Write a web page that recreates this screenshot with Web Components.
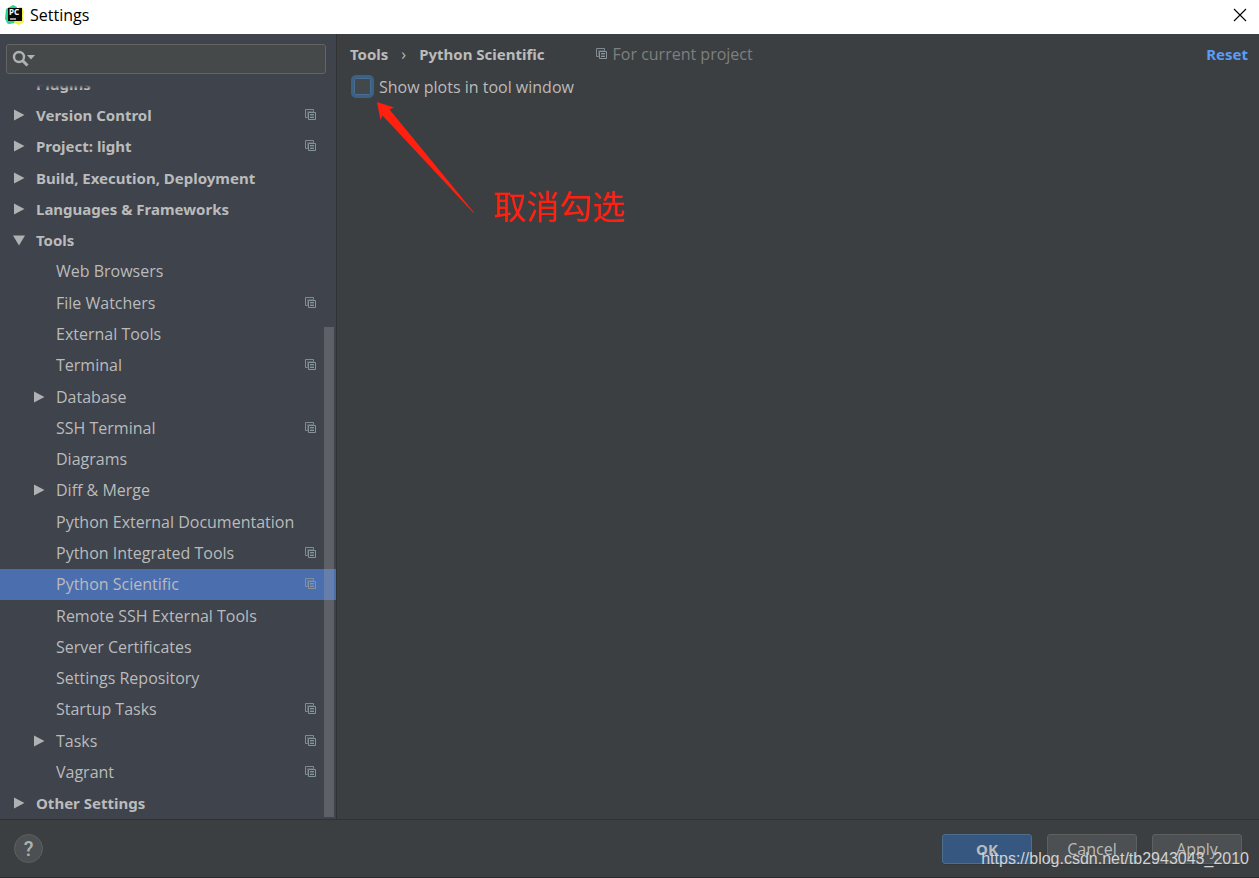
<!DOCTYPE html>
<html lang="en">
<head>
<meta charset="utf-8">
<title>Settings</title>
<style>
html, body { margin: 0; height: 100%; }
body { background: #3c3f41; color: #bbbbbb; font: 16px/20px "Open Sans", "Noto Sans CJK SC", sans-serif; overflow: hidden; }
</style>
</head>
<body>
<settings-window>
  <title-bar slot="title">Settings</title-bar>
  <settings-sidebar slot="sidebar">
    <tree-row group>Plugins</tree-row>
    <tree-row group arrow="right">Version Control<project-icon slot="badge"></project-icon></tree-row>
    <tree-row group arrow="right">Project: light<project-icon slot="badge"></project-icon></tree-row>
    <tree-row group arrow="right">Build, Execution, Deployment</tree-row>
    <tree-row group arrow="right">Languages &amp; Frameworks</tree-row>
    <tree-row group arrow="down">Tools</tree-row>
    <tree-row>Web Browsers</tree-row>
    <tree-row>File Watchers<project-icon slot="badge"></project-icon></tree-row>
    <tree-row>External Tools</tree-row>
    <tree-row>Terminal<project-icon slot="badge"></project-icon></tree-row>
    <tree-row arrow="right">Database</tree-row>
    <tree-row>SSH Terminal<project-icon slot="badge"></project-icon></tree-row>
    <tree-row>Diagrams</tree-row>
    <tree-row arrow="right">Diff &amp; Merge</tree-row>
    <tree-row>Python External Documentation</tree-row>
    <tree-row>Python Integrated Tools<project-icon slot="badge"></project-icon></tree-row>
    <tree-row selected>Python Scientific<project-icon slot="badge"></project-icon></tree-row>
    <tree-row>Remote SSH External Tools</tree-row>
    <tree-row>Server Certificates</tree-row>
    <tree-row>Settings Repository</tree-row>
    <tree-row>Startup Tasks<project-icon slot="badge"></project-icon></tree-row>
    <tree-row arrow="right">Tasks<project-icon slot="badge"></project-icon></tree-row>
    <tree-row>Vagrant<project-icon slot="badge"></project-icon></tree-row>
    <tree-row group arrow="right">Other Settings</tree-row>
  </settings-sidebar>
  <settings-page slot="page">
    <page-header slot="header"></page-header>
    <check-option>Show plots in tool window</check-option>
    <red-callout slot="note">取消勾选</red-callout>
  </settings-page>
  <dialog-footer slot="footer">
    <dialog-button primary>OK</dialog-button>
    <dialog-button>Cancel</dialog-button>
    <dialog-button>Apply</dialog-button>
  </dialog-footer>
  <water-mark slot="mark">https://blog.csdn.net/tb2943043_2010</water-mark>
</settings-window>

<script>
function define(name, markup) {
  customElements.define(name, class extends HTMLElement {
    constructor() {
      super();
      const template = document.createElement('template');
      template.innerHTML = markup;
      this.attachShadow({ mode: 'open' }).append(template.content.cloneNode(true));
    }
  });
}

define('project-icon', `
<style>
:host { display: block; width: 12px; height: 12px; color: #87939a; }
svg { display: block; }
</style>
<svg width="12" height="12" viewBox="0 0 12 12" fill="none" stroke="currentColor" aria-hidden="true">
  <path d="M2.500 8.500H.5V.5h8v2" opacity=".9"/>
  <path d="M2.500 9V2.500H9" opacity=".4"/>
  <path d="M3.500 3.500h7v7h-7z"/>
  <path d="M5 5.500h4M5 8.500h4"/>
  <path d="M5 6.500h4M5 7.500h4" opacity=".35"/>
</svg>`);

define('title-bar', `
<style>
:host { display: flex; align-items: center; height: 34px; padding: 0 12px 4px 5px; box-sizing: border-box; background: #fff; color: #000; gap: 5px; }
h1 { flex: 1; margin: 0; font-size: 16px; font-weight: 400; line-height: 20px; }
button { all: unset; width: 14px; height: 14px; }
svg { display: block; }
</style>
<svg width="20" height="20" viewBox="0 0 20 20" aria-hidden="true">
  <path d="M1 4 8 0l4 2-2 16-7 1-3-5z" fill="#21d789"/>
  <path d="m14 2 3 0 2 5-1 5 1 5-5 3-5-2z" fill="#f4f04a"/>
  <path d="m1 14 4 2 1 3-4-1z" fill="#21d7a9"/>
  <path d="M3 3h14v13H3z" fill="#080808"/>
  <path d="M5 14h6" stroke="#fff" stroke-width="1.200"/>
  <text x="4" y="10" font-family="Noto Sans" font-size="8" font-weight="700" fill="#fff">PC</text>
</svg>
<h1><slot></slot></h1>
<button aria-label="Close"><svg width="14" height="14" viewBox="0 0 14 14" stroke="#000" stroke-width="1.100"><path d="m1 1 12 12M13 1 1 13"/></svg></button>`);

define('search-field', `
<style>
:host { display: flex; align-items: center; height: 30px; box-sizing: border-box; border: 1px solid #646464; border-radius: 3px; background: #45494a; padding: 0 5px; gap: 4px; }
input { all: unset; flex: 1; min-width: 0; height: 20px; color: #bbb; }
svg { display: block; }
</style>
<svg width="24" height="18" viewBox="0 0 24 18" aria-hidden="true">
  <circle cx="7" cy="7" r="5" fill="none" stroke="#afb1b3" stroke-width="2.400"/>
  <path d="m10.500 10.500 5 5" stroke="#afb1b3" stroke-width="3"/>
  <path d="M15 5h8l-4 4.500z" fill="#afb1b3"/>
</svg>
<input type="text" aria-label="Search settings">`);

define('tree-row', `
<style>
:host { display: block; min-height: 0; }
:host([selected]) { background: #4b6eaf; }
button { all: unset; box-sizing: border-box; display: grid; grid-template-columns: 12px 1fr 12px; column-gap: 11px; align-items: center; width: 100%; height: 100%; padding: 0 20px 0 33px; }
:host([group]) button { padding-left: 13px; }
.label { white-space: nowrap; line-height: 20px; }
:host([group]) .label { font: 700 15px/20px "Noto Sans", sans-serif; }
svg { display: none; fill: #afb1b3; }
:host([arrow="right"]) .right, :host([arrow="down"]) .down { display: block; }
</style>
<button>
  <span><svg class="right" width="12" height="12" viewBox="0 0 12 12" aria-hidden="true"><path d="M1 .5v11L11.500 6z"/></svg><svg class="down" width="12" height="12" viewBox="0 0 12 12" aria-hidden="true"><path d="M0 1.500h12L6 11.500z"/></svg></span>
  <span class="label"><slot></slot></span>
  <slot name="badge"></slot>
</button>`);

define('settings-sidebar', `
<style>
:host { display: flex; flex-direction: column; min-height: 0; background: #3e434c; border-right: 1px solid #323232; padding-top: 10px; }
search-field { margin: 0 10px 11px 6px; flex: none; }
.view { position: relative; flex: 1; min-height: 0; display: flex; overflow: hidden; }
nav { flex: 1; min-width: 0; margin: -17px 0 0; display: grid; grid-auto-rows: 1fr; }
.fade { position: absolute; inset: 0 0 auto; height: 4px; background: linear-gradient(#3e434c, #3e434c00); }
.thumb { position: absolute; right: 2px; top: 33%; bottom: 2px; width: 10px; background: #a6a6a64d; }
</style>
<search-field></search-field>
<div class="view">
  <nav aria-label="Settings categories"><slot></slot></nav>
  <div class="fade"></div>
  <div class="thumb"></div>
</div>`);

define('page-header', `
<style>
:host { display: flex; align-items: center; height: 20px; line-height: 20px; white-space: nowrap; }
b, a { font: 700 15px/20px "Noto Sans", sans-serif; }
b + span { margin: 0 13px; }
.scope { display: flex; align-items: center; gap: 5px; margin-left: 51px; color: #7d7f80; flex: 1; }
a { color: #589df6; text-decoration: none; }
</style>
<b>Tools</b><span>›</span><b>Python Scientific</b>
<span class="scope"><project-icon></project-icon>For current project</span>
<a href="#reset">Reset</a>`);

define('check-option', `
<style>
:host { display: block; }
label { display: inline-flex; align-items: center; gap: 5px; line-height: 20px; }
input { appearance: none; box-sizing: border-box; width: 23px; height: 23px; margin: 0; border: 3px solid #3d6185; border-radius: 5px; background: #43494a; box-shadow: inset 0 0 0 1px #466d94; }
</style>
<label><input type="checkbox"><span><slot></slot></span></label>`);

define('red-callout', `
<style>
:host { position: absolute; left: 39px; top: 67px; width: 249px; height: 124px; color: #ff2010; pointer-events: none; }
svg { display: block; position: absolute; left: 0; top: 0; }
span { position: absolute; right: 0; bottom: 0; font: 33px/40px "Noto Sans CJK SC", sans-serif; white-space: nowrap; }
</style>
<svg width="100" height="114" viewBox="0 0 100 114" fill="currentColor" aria-hidden="true"><path d="M1 1 18 6.500 13.500 8.500 98 111.500 97.500 112 6.500 14.500 4.500 19z"/></svg>
<span><slot></slot></span>`);

define('settings-page', `
<style>
:host { position: relative; display: block; min-width: 0; padding: 10px 11px 0 13px; }
.body { margin: 11px 0 0 1px; }
</style>
<slot name="header"></slot>
<div class="body"><slot></slot></div>
<slot name="note"></slot>`);

define('dialog-button', `
<style>
:host { display: block; width: 90px; height: 30px; }
button { all: unset; box-sizing: border-box; width: 100%; height: 100%; text-align: center; border: 1px solid #5e6060; border-radius: 3px; background: #4c5052; color: #bbb; line-height: 28px; box-shadow: 0 1px 1px #35383a; }
:host([primary]) button { background: #365880; border-color: #4c708c; font: 700 15px/28px "Noto Sans", sans-serif; }
</style>
<button><slot></slot></button>`);

define('dialog-footer', `
<style>
:host { display: flex; align-items: center; gap: 15px; height: 59px; box-sizing: border-box; border-top: 1px solid #323232; border-bottom: 1px solid #2b2b2b; padding: 0 17px 0 14px; }
.help { all: unset; box-sizing: border-box; width: 29px; height: 29px; border: 1px solid #5e6060; border-radius: 50%; background: #4c5052; color: #afb1b3; text-align: center; font: 500 20px/28px Roboto, sans-serif; margin-right: auto; }
</style>
<button class="help" aria-label="Help">?</button>
<slot></slot>`);

define('water-mark', `
<style>
:host { position: absolute; right: 10px; bottom: 9px; font: 16px/20px "Liberation Sans", sans-serif; color: #d2d2d2; pointer-events: none; white-space: nowrap; }
</style>
<slot></slot>`);

define('settings-window', `
<style>
:host { position: relative; display: grid; height: 100vh; grid-template: auto minmax(0, 1fr) auto / 337px minmax(0, 1fr); }
::slotted([slot="title"]), ::slotted([slot="footer"]) { grid-column: 1 / -1; }
</style>
<slot name="title"></slot>
<slot name="sidebar"></slot>
<slot name="page"></slot>
<slot name="footer"></slot>
<slot name="mark"></slot>`);
</script>
</body>
</html>
